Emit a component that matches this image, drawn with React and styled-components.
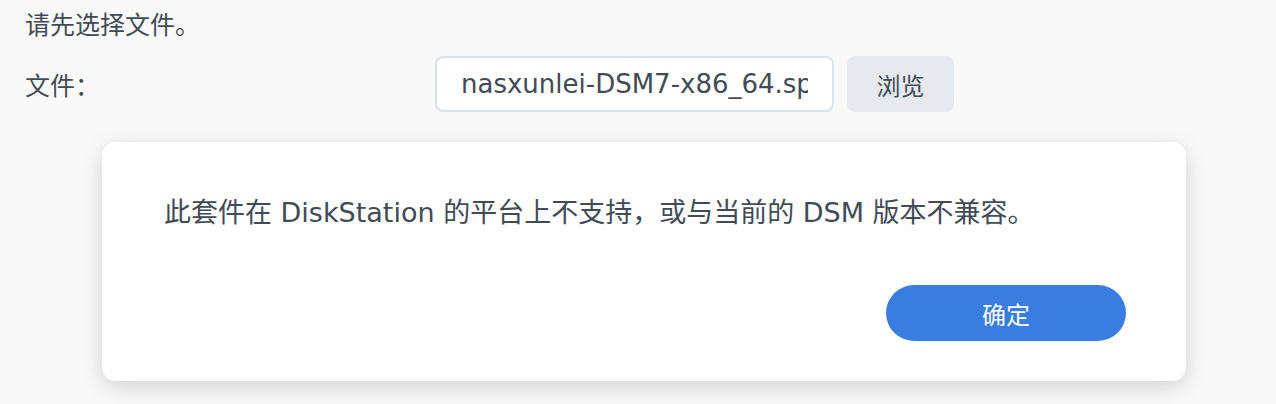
import React from 'react'
import styled, { createGlobalStyle } from 'styled-components'

const GlobalStyle = createGlobalStyle`
    html, body {
        margin: 0;
        padding: 0;
        background: #f9f9f9;
    }
    body {
        font-family: "DejaVu Sans", "Noto Sans CJK SC", sans-serif;
        color: #414b55;
    }
`

const Page = styled.div`
    position: relative;
    width: 1276px;
    height: 404px;
    overflow: hidden;
    background: #f9f9f9;
`

const Form = styled.div`
    padding: 9px 0 0 25px;
    display: flex;
    flex-direction: column;
`

const Hint = styled.p`
    margin: 0;
    font-size: 25px;
    line-height: 34px;
`

const Row = styled.div`
    display: flex;
    align-items: center;
    margin-top: 13px;
`

const Label = styled.span`
    width: 410px;
    font-size: 25px;
`

const FileInput = styled.div`
    box-sizing: border-box;
    width: 399px;
    height: 56px;
    padding: 0 24px;
    border: 2px solid #d9e1ea;
    border-radius: 8px;
    background: #fff;
    font-size: 26px;
    line-height: 52px;
`

const Value = styled.span`
    display: block;
    white-space: nowrap;
    overflow: hidden;
`

const Button = styled.button`
    font-family: inherit;
    border: none;
    cursor: pointer;
    padding: 0;
    height: 56px;
    font-size: 24px;
    ${({ $primary }) => $primary ? `
        width: 240px;
        border-radius: 28px;
        background: #3a7de0;
        color: #fff;
    ` : `
        width: 107px;
        margin-left: 13px;
        border-radius: 8px;
        background: #e6e9ee;
        color: #414b55;
    `}
`

const Dialog = styled.div`
    position: absolute;
    left: 102px;
    top: 142px;
    box-sizing: border-box;
    width: 1084px;
    height: 239px;
    padding: 52px 60px 40px 62px;
    background: #fefefe;
    border-radius: 14px;
    box-shadow: 0 6px 22px rgba(0, 0, 0, 0.16);
    display: flex;
    flex-direction: column;
`

const Message = styled.p`
    margin: 0;
    font-size: 27px;
    line-height: 38px;
`

const Footer = styled.div`
    margin-top: auto;
    display: flex;
    justify-content: flex-end;
`

export default function App() {
    return (
        <Page>
            <GlobalStyle />
            <Form>
                <Hint>请先选择文件。</Hint>
                <Row>
                    <Label>文件：</Label>
                    <FileInput>
                        <Value>nasxunlei-DSM7-x86_64.spk</Value>
                    </FileInput>
                    <Button>浏览</Button>
                </Row>
            </Form>
            <Dialog>
                <Message>此套件在 DiskStation 的平台上不支持，或与当前的 DSM 版本不兼容。</Message>
                <Footer>
                    <Button $primary>确定</Button>
                </Footer>
            </Dialog>
        </Page>
    )
}
